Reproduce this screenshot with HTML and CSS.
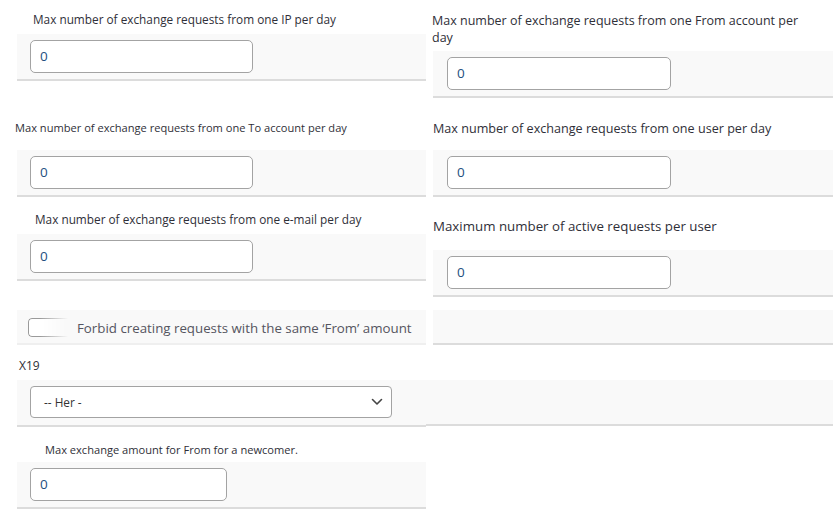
FILE: index.html
```html
<!DOCTYPE html>
<html>
<head>
<meta charset="utf-8">
<link rel="stylesheet" href="styles.css">
</head>
<body>
<div class="page">
  <div class="col col-left">
    <div class="label l1">Max number of exchange requests from one IP per day</div>
    <div class="band"><div class="input w223">0</div></div>

    <div class="label l2">Max number of exchange requests from one To account per day</div>
    <div class="band"><div class="input w223">0</div></div>

    <div class="label l3">Max number of exchange requests from one e-mail per day</div>
    <div class="band"><div class="input w223">0</div></div>

    <div class="band check-band">
      <span class="checkbox"></span>
      <span class="check-text">Forbid creating requests with the same ‘From’ amount</span>
    </div>

    <div class="label l5">X19</div>
    <div class="band">
      <div class="select">
        <span>-- Her -</span>
        <svg class="chev" width="12" height="8" viewBox="0 0 12 8"><path d="M1.5 1.5 L6 6 L10.5 1.5" fill="none" stroke="#444" stroke-width="1.6" stroke-linecap="round" stroke-linejoin="round"/></svg>
      </div>
    </div>

    <div class="label l6">Max exchange amount for From for a newcomer.</div>
    <div class="band band-last"><div class="input w197">0</div></div>
  </div>

  <div class="col col-right">
    <div class="label r1">Max number of exchange requests from one From account per day</div>
    <div class="band rband"><div class="input w224">0</div></div>

    <div class="label r2">Max number of exchange requests from one user per day</div>
    <div class="band rband"><div class="input w224">0</div></div>

    <div class="label r3">Maximum number of active requests per user</div>
    <div class="band rband"><div class="input w224">0</div></div>

    <div class="band rband empty-band"></div>

    <div class="band sel-ext"></div>
  </div>
</div>
</body>
</html>
```

FILE: styles.css
```css
* { box-sizing: border-box; }
html, body { margin: 0; padding: 0; background: #fff; }
body {
  font-family: "Open Sans", "Noto Sans", sans-serif;
  color: #2f2f38;
}
.page {
  display: grid;
  grid-template-columns: 426px 407px;
  width: 833px;
  height: 510px;
  overflow: hidden;
}
.col { display: flex; flex-direction: column; }

.label { line-height: 16px; white-space: nowrap; }
.band {
  background: #f9f9f9;
  border-bottom: 2px solid #dcdcdc;
  height: 47px;
  padding-top: 6px;
}
.col-left .band { margin-left: 17px; padding-left: 13px; }
.rband { margin-left: 7px; padding-left: 14px; }

.input {
  height: 33px;
  background: #fff;
  border: 1px solid #a3a3a3;
  border-radius: 5px;
  font-size: 13.5px;
  line-height: 31px;
  padding-left: 9px;
  color: #24507f;
}
.w223 { width: 223px; }
.w224 { width: 224px; }
.w197 { width: 197px; }

.l1 { font-size: 11.8px; padding: 11px 0 0 33px; height: 34px; }
.l2 { font-size: 11.1px; padding: 39px 0 0 15px; height: 69px; }
.l3 { font-size: 11.8px; padding: 14px 0 0 35px; height: 37px; }
.l5 { font-size: 12px; padding: 13px 0 0 19px; height: 35px; }
.l6 { font-size: 11.1px; padding: 15px 0 0 45px; height: 35px; }

.check-band {
  margin-top: 29px;
  height: 35px;
  padding-top: 8px;
  display: flex;
  align-items: flex-start;
  padding-left: 11px !important;
  border-bottom: 2px solid #efefef;
}
.checkbox {
  width: 40px;
  height: 19px;
  border: 1px solid #9a9a9a;
  border-right: none;
  border-radius: 4px 0 0 4px;
  background: #fff;
  -webkit-mask-image: linear-gradient(to right, #000 30%, rgba(0,0,0,0) 100%);
  mask-image: linear-gradient(to right, #000 30%, rgba(0,0,0,0) 100%);
}
.check-text {
  margin-left: 9px;
  font-size: 13.3px;
  line-height: 20px;
  color: #555560;
  white-space: nowrap;
}

.select {
  width: 362px;
  height: 32px;
  background: #fff;
  border: 1px solid #a3a3a3;
  border-radius: 4px;
  display: flex;
  align-items: center;
  justify-content: space-between;
  padding: 0 8px 0 13px;
  font-size: 11.8px;
  color: #333;
}
.band-last { height: 47px; }

.r1 { font-size: 12.5px; line-height: 17px; padding: 12px 0 0 6px; height: 51px; white-space: normal; width: 380px; }
.r2 { font-size: 12.6px; line-height: 17px; padding: 22px 0 0 7px; height: 52px; }
.r3 { font-size: 13.3px; line-height: 18px; padding: 20px 0 0 7px; height: 53px; }

.empty-band { margin-top: 13px; height: 35px; }
.sel-ext { margin-top: 35px; height: 46px; }
```
